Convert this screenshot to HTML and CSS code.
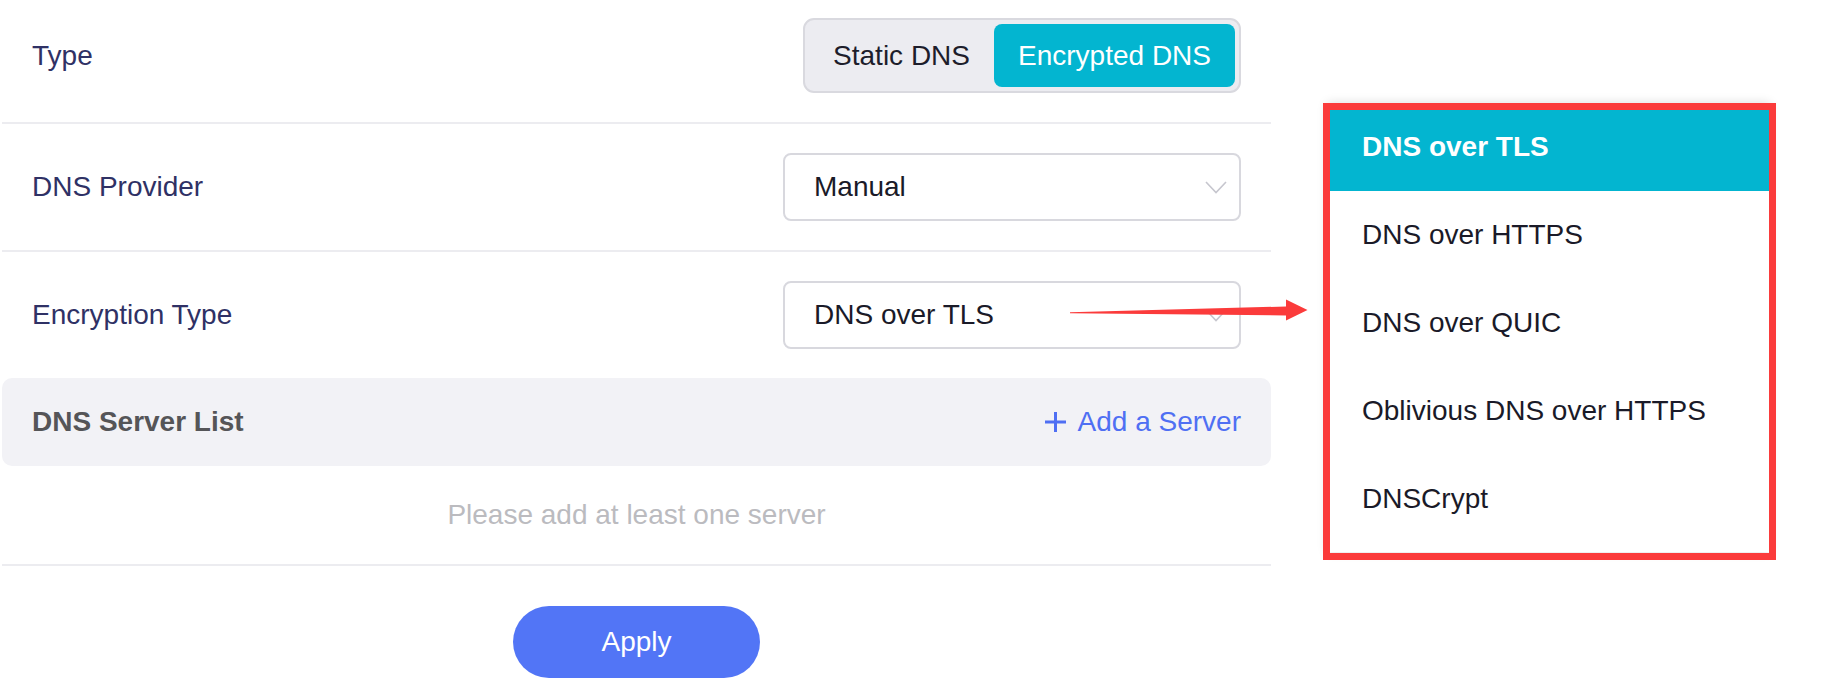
FILE: index.html
```html
<!DOCTYPE html>
<html lang="en">
<head>
    <meta charset="UTF-8">
    <meta name="viewport" content="width=device-width, initial-scale=1.0">
    <title>Encrypted DNS</title>
    <link rel="stylesheet" href="styles.css">
</head>
<body>
<div class="page">
    <div class="settings">
        <div class="row first">
            <span class="label">Type</span>
            <div class="segmented">
                <span class="segment">Static DNS</span>
                <span class="segment active">Encrypted DNS</span>
            </div>
        </div>

        <div class="row">
            <span class="label">DNS Provider</span>
            <div class="select">
                <span>Manual</span>
                <svg class="chevron" width="22" height="13" viewBox="0 0 22 13">
                    <polyline points="1,1 11,11.5 21,1" fill="none" stroke="#c6c6ce" stroke-width="1.6"/>
                </svg>
            </div>
        </div>

        <div class="row no-line">
            <span class="label">Encryption Type</span>
            <div class="select">
                <span>DNS over TLS</span>
                <svg class="chevron" width="22" height="13" viewBox="0 0 22 13">
                    <polyline points="1,1 11,11.5 21,1" fill="none" stroke="#c6c6ce" stroke-width="1.6"/>
                </svg>
            </div>
        </div>

        <div class="server-head">
            <span class="server-title">DNS Server List</span>
            <a class="add-link" href="#">
                <svg width="23" height="22" viewBox="0 0 23 22">
                    <path d="M11.5 1v20M1 11h21" stroke="#4f6ff3" stroke-width="3" fill="none"/>
                </svg>
                Add a Server
            </a>
        </div>
        <div class="server-empty">Please add at least one server</div>

        <button class="apply-btn">Apply</button>
    </div>

    <!-- open list of the Encryption Type select -->
    <ul class="menu">
        <li class="menu-item active">DNS over TLS</li>
        <li class="menu-item">DNS over HTTPS</li>
        <li class="menu-item">DNS over QUIC</li>
        <li class="menu-item">Oblivious DNS over HTTPS</li>
        <li class="menu-item">DNSCrypt</li>
    </ul>

    <div class="callout-box"></div>
    <svg class="callout-arrow" width="260" height="30" viewBox="0 0 260 30">
        <polygon points="10,17.2 226,11.5 226,4.5 247.5,15 226,25.5 226,20.5 10,18.2" fill="#fb3b3b"/>
    </svg>
</div>
</body>
</html>
```

FILE: styles.css
```css
body {
    margin: 0;
    background: #fff;
    font-family: "Liberation Sans", Arial, sans-serif;
    font-size: 28px;
}
.page {
    position: relative;
    width: 1826px;
    height: 692px;
    overflow: hidden;
}
.settings {
    width: 1269px;
    margin-left: 2px;
}
.row {
    display: flex;
    align-items: center;
    justify-content: space-between;
    padding: 29px 30px 29px 30px;
    border-bottom: 2px solid #ececf0;
}
.row.first {
    padding-top: 18px;
}
.row.no-line {
    border-bottom: none;
}
.label {
    color: #2f3165;
}
.segmented {
    display: flex;
    padding: 4px;
    border: 2px solid #d9d9df;
    border-radius: 11px;
    background-color: #ececf1;
}
.segment {
    height: 63px;
    line-height: 63px;
    padding: 0 24px;
    color: #1d1d2b;
    border-radius: 8px;
}
.segment.active {
    background-color: #03b5d0;
    color: #fff;
}
.select {
    box-sizing: border-box;
    width: 458px;
    height: 68px;
    display: flex;
    align-items: center;
    justify-content: space-between;
    padding: 0 12px 0 29px;
    border: 2px solid #d8d8de;
    border-radius: 8px;
    color: #1a1a28;
}
.chevron {
    display: block;
}
.server-head {
    height: 88px;
    display: flex;
    align-items: center;
    justify-content: space-between;
    padding: 0 30px 0 30px;
    border-radius: 10px;
    background-color: #f2f2f6;
}
.server-title {
    font-weight: bold;
    color: #555558;
}
.add-link {
    display: flex;
    align-items: center;
    gap: 11px;
    color: #4f6ff3;
    text-decoration: none;
}
.add-link svg {
    display: block;
}
.server-empty {
    height: 98px;
    display: flex;
    align-items: center;
    justify-content: center;
    color: #bbbbbf;
    border-bottom: 2px solid #ececf0;
}
.apply-btn {
    display: block;
    width: 247px;
    height: 72px;
    margin: 40px auto 0;
    border: none;
    border-radius: 36px;
    background-color: #5275f6;
    color: #fff;
    font-family: inherit;
    font-size: 28px;
    cursor: pointer;
}
.menu {
    position: absolute;
    left: 1327px;
    top: 103px;
    width: 443px;
    margin: 0;
    padding: 0 0 9px;
    list-style: none;
    background: #fff;
    box-shadow: 0 0 10px rgba(0, 0, 0, 0.14);
}
.menu-item {
    height: 88px;
    line-height: 88px;
    padding-left: 35px;
    color: #1a1a28;
}
.menu-item.active {
    background-color: #03b5d0;
    color: #fff;
    font-weight: bold;
}
.callout-box {
    position: absolute;
    left: 1323px;
    top: 103px;
    width: 453px;
    height: 457px;
    box-sizing: border-box;
    border: 7px solid #fb3b3b;
}
.callout-arrow {
    position: absolute;
    left: 1060px;
    top: 295px;
}
```
